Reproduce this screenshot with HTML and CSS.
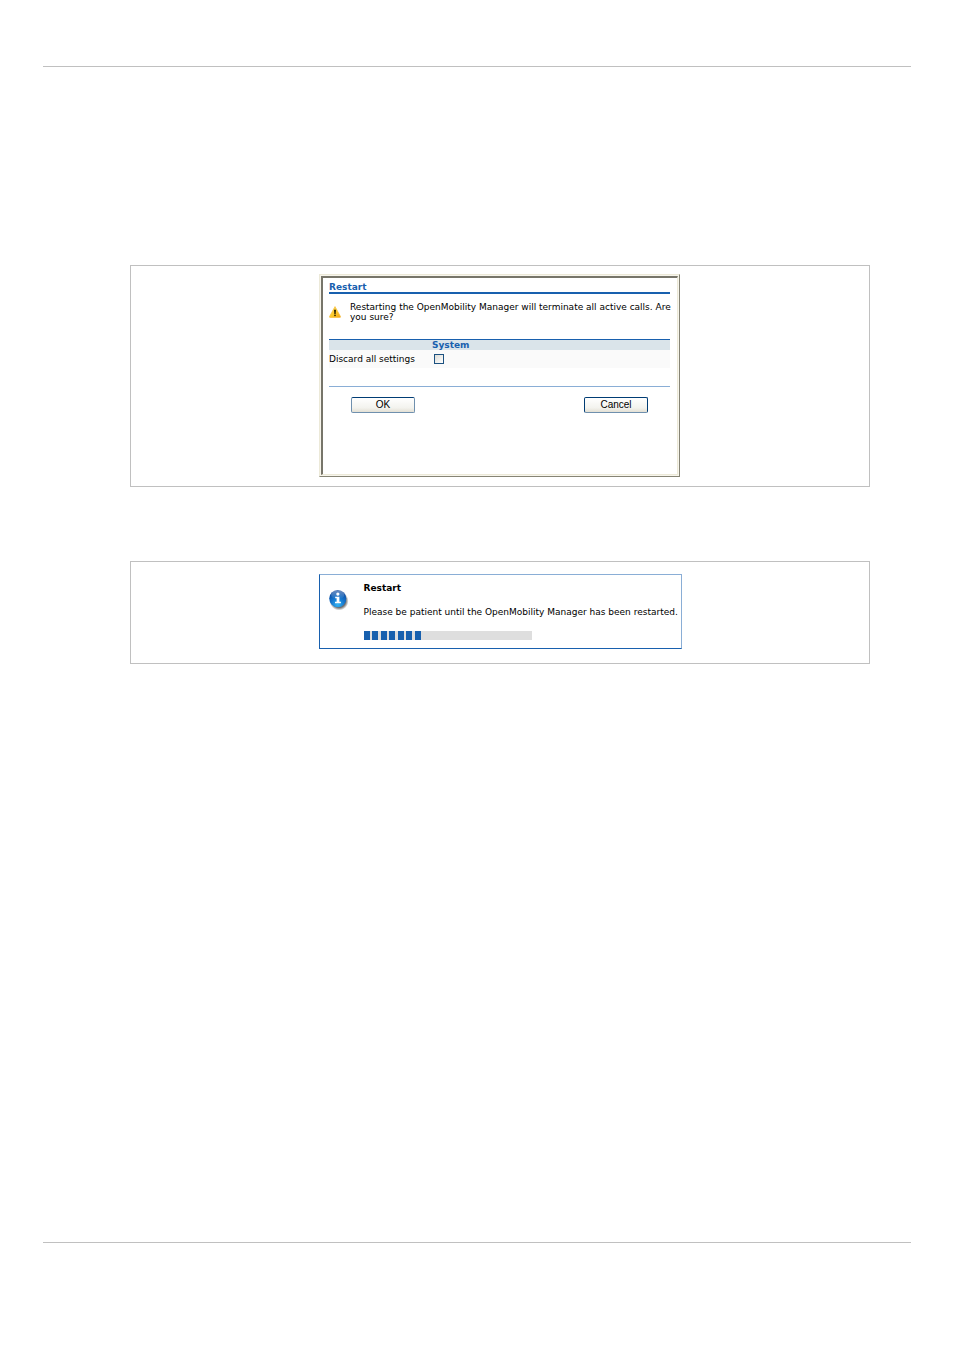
FILE: index.html
```html
<!DOCTYPE html>
<html lang="en">
<head>
    <meta charset="UTF-8">
    <meta name="viewport" content="width=device-width, initial-scale=1.0">
    <title>Restart</title>
    <link rel="stylesheet" href="styles.css">
</head>
<body>

<main class="page">
    <section class="figure">
        <form class="dialog">
            <div class="dialog-body">
                <h1 class="dialog-title">Restart</h1>
                <div class="warning">
                    <svg class="warning-icon" viewBox="0 0 12 12" aria-hidden="true">
                        <defs>
                            <linearGradient id="amber" x1="0" y1="0" x2="1" y2="1">
                                <stop offset="0" stop-color="#ffe680"/>
                                <stop offset="0.5" stop-color="#fccb2c"/>
                                <stop offset="1" stop-color="#f2a313"/>
                            </linearGradient>
                        </defs>
                        <path d="M6 0.6 L11.5 10.6 Q11.7 11.5 10.8 11.5 H1.2 Q0.3 11.5 0.5 10.6 Z" fill="url(#amber)" stroke="#f6bd3c" stroke-width="0.7" stroke-linejoin="round"/>
                        <path d="M5 3.8 H7 L6.7 8 H5.3 Z" fill="#2b2200"/>
                        <rect x="5.2" y="8.6" width="1.6" height="1.5" fill="#2b2200"/>
                    </svg>
                    <p>Restarting the OpenMobility Manager will terminate all active calls. Are<br>you sure?</p>
                </div>
                <table class="settings">
                    <thead>
                        <tr>
                            <td></td>
                            <th>System</th>
                        </tr>
                    </thead>
                    <tbody>
                        <tr>
                            <td class="setting-name"><label for="discard">Discard all settings</label></td>
                            <td><input type="checkbox" id="discard" class="checkbox"></td>
                        </tr>
                    </tbody>
                </table>
                <div class="actions">
                    <button type="button" class="button">OK</button>
                    <button type="button" class="button button-focus">Cancel</button>
                </div>
            </div>
        </form>
    </section>

    <section class="figure figure-small">
        <div class="notice">
            <svg class="info-icon" viewBox="0 0 21 24" aria-hidden="true">
                <defs>
                    <radialGradient id="ball" cx="0.5" cy="0.85" r="0.85">
                        <stop offset="0" stop-color="#35b4f2"/>
                        <stop offset="0.45" stop-color="#1577cf"/>
                        <stop offset="1" stop-color="#093f95"/>
                    </radialGradient>
                    <linearGradient id="shine" x1="0" y1="0" x2="0" y2="1">
                        <stop offset="0" stop-color="#ffffff" stop-opacity="0.4"/>
                        <stop offset="1" stop-color="#ffffff" stop-opacity="0"/>
                    </linearGradient>
                    <radialGradient id="shade">
                        <stop offset="0.7" stop-color="#333333" stop-opacity="0.7"/>
                        <stop offset="1" stop-color="#333333" stop-opacity="0"/>
                    </radialGradient>
                </defs>
                <circle cx="10.6" cy="13" r="10" fill="url(#shade)"/>
                <circle cx="9.2" cy="10.5" r="9" fill="url(#ball)"/>
                <ellipse cx="9.2" cy="6.5" rx="7" ry="4.8" fill="url(#shine)"/>
                <circle cx="9.3" cy="5.8" r="1.7" fill="#ffffff"/>
                <path d="M6.5 8.5 H10.9 V13.8 H12.5 V15.5 H6.3 V13.8 H8 V10.1 H6.5 Z" fill="#ffffff"/>
            </svg>
            <div class="notice-body">
                <h2>Restart</h2>
                <p>Please be patient until the OpenMobility Manager has been restarted.</p>
                <div class="progress" role="progressbar" aria-label="Restart">
                    <span></span><span></span><span></span><span></span><span></span><span></span><span></span>
                </div>
            </div>
        </div>
    </section>
</main>

</body>
</html>
```
FILE: styles.css
```css
* {
    box-sizing: border-box;
}

body {
    margin: 0;
    padding: 66px 43px 107px;
    min-height: 100vh;
    display: flex;
    background-color: #ffffff;
    color: #000000;
    font-family: Verdana, "DejaVu Sans", sans-serif;
    font-size: 9px;
    line-height: 10px;
}

h1, h2, p {
    margin: 0;
}

.page {
    flex: 1;
    padding: 198px 41px 0 87px;
    border-top: 1px solid #c0c0c0;
    border-bottom: 1px solid #c0c0c0;
}

.figure {
    display: flex;
    justify-content: center;
    padding: 8px 1px 9px 0;
    border: 1px solid #c0c0c0;
}

.figure-small {
    margin-top: 74px;
    padding: 12px 0 14px;
}

/* Restart dialog */
.dialog {
    width: 361px;
    border: 1px solid #ece9d8;
    border-right-color: #868475;
    border-bottom-color: #868475;
    padding: 1px;
    background-color: #f7f5ec;
}

.dialog-body {
    height: 100%;
    padding: 4px 7px 61px 6px;
    border-style: solid;
    border-width: 2px 1px 1px 2px;
    border-color: #77756a #ece9d8 #ece9d8 #77756a;
    background-color: #ffffff;
}

.dialog-title {
    border-bottom: 2px solid #1860ae;
    color: #1860ae;
    font-size: 9px;
    line-height: 10px;
}

.warning {
    display: flex;
    align-items: center;
    gap: 9px;
    margin: 8px 0 17px;
}

.warning p {
    flex: 1;
    min-width: 0;
    white-space: nowrap;
}

.warning-icon {
    flex: none;
    width: 12px;
    height: 12px;
}

.settings {
    width: 100%;
    border-collapse: collapse;
    border-top: 1px solid #1860ae;
}

.settings th, .settings td {
    padding: 0;
    text-align: left;
}

.settings thead {
    background-color: #dae4ea;
}

.settings th {
    color: #1860ae;
    font-size: 9px;
    line-height: 10px;
}

.settings tbody {
    background-color: #fafafa;
}

.settings tbody td {
    height: 18px;
}

.setting-name {
    width: 103px;
}

.checkbox {
    appearance: none;
    display: block;
    width: 10px;
    height: 10px;
    margin: 0 0 0 2px;
    border: 1px solid #1c5180;
    background: linear-gradient(135deg, #dcdcd7, #ffffff);
}

.checkbox:checked {
    background: #21a121;
}

.actions {
    display: flex;
    justify-content: space-between;
    margin-top: 18px;
    padding: 10px 22px 0;
    border-top: 1px solid #8aaed6;
}

.button {
    width: 64px;
    height: 16px;
    padding: 0;
    border: 1px solid #6f90ae;
    border-top-color: #003c74;
    border-radius: 2px;
    background: linear-gradient(#ffffff, #f3f3ee 70%, #e3e0d4);
    color: #000000;
    font-family: Arial, "Liberation Sans", sans-serif;
    font-size: 10px;
    line-height: 14px;
}

.button-focus {
    border-color: #003c74;
    border-bottom-color: #6f90ae;
}

/* Progress notice */
.notice {
    display: flex;
    gap: 15px;
    width: 363px;
    padding: 8px 7px 8px 9px;
    border: 1px solid #8aaed6;
    border-left-color: #1860ae;
    border-bottom-color: #1860ae;
}

.notice p {
    white-space: nowrap;
}

.info-icon {
    flex: none;
    width: 20px;
    height: 24px;
    margin-top: 5px;
}

.notice-body {
    flex: 1;
    min-width: 0;
}

.notice h2 {
    margin-bottom: 14px;
    font-size: 9px;
    line-height: 10px;
}

.progress {
    display: flex;
    justify-content: space-between;
    width: 168px;
    height: 9px;
    margin-top: 14px;
    padding-right: 111px;
    background-color: #dedede;
}

.progress span {
    width: 6px;
    background-color: #1860ae;
}
```
